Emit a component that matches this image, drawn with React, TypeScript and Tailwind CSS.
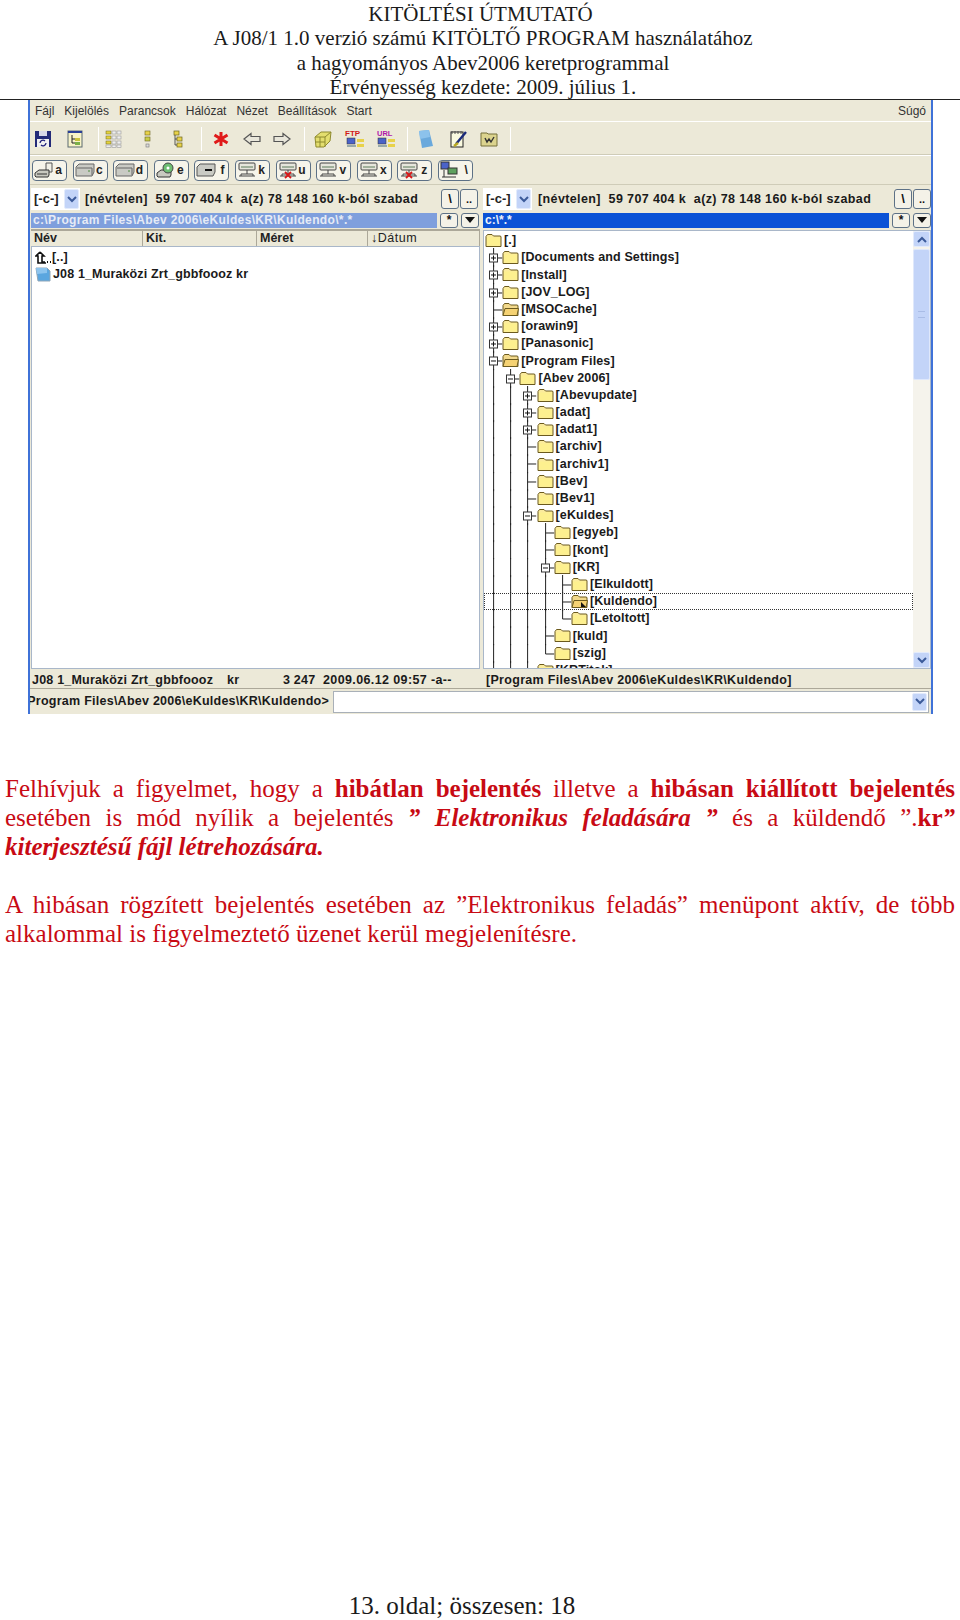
const sans = 'font-["Liberation_Sans",Arial,sans-serif]';

function Folder({ open = false, arrow = false }: { open?: boolean; arrow?: boolean }) {
  return (
    <svg width="17" height="15" viewBox="0 0 17 15" className="shrink-0">
      <path d="M1 13.5V3.5L2.5 1.5H7L8.5 3H15.5L16 4V13.5Z" fill={open ? '#f2d98c' : '#fbeb9c'} stroke="#6b5a1e" strokeWidth="1" />
      {open && <path d="M1 13.5L3 6.5H16.5L15 13.5Z" fill="#f5d273" stroke="#6b5a1e" strokeWidth="1" />}
      {!open && <path d="M2 4.5H15V12.5H2Z" fill="#fdf08f" />}
      {arrow && <path d="M10 8L15 13H10Z" fill="#111" />}
    </svg>
  );
}

type Cell = 'line' | 'tee' | 'elbow' | 'plus' | 'minus' | 'none';

function GuideCell({ kind }: { kind: Cell }) {
  return (
    <svg width="17.2" height="17.2" viewBox="0 0 17.2 17.2" className="shrink-0 overflow-visible">
      {(kind === 'line' || kind === 'tee' || kind === 'plus' || kind === 'minus') && <path d="M8.6 -1V18.2" stroke="#222" strokeWidth="1" />}
      {kind === 'elbow' && <path d="M8.6 -1V9H17.2" stroke="#222" strokeWidth="1" fill="none" />}
      {(kind === 'tee' || kind === 'plus' || kind === 'minus') && <path d="M8.6 9H17.2" stroke="#222" strokeWidth="1" />}
      {(kind === 'plus' || kind === 'minus') && <rect x="4.5" y="5" width="8" height="8" fill="#fff" stroke="#333" />}
      {(kind === 'plus' || kind === 'minus') && <path d="M6 9H11" stroke="#111" strokeWidth="1" />}
      {kind === 'plus' && <path d="M8.5 6.5V11.5" stroke="#111" strokeWidth="1" />}
    </svg>
  );
}

const tree: { cells: Cell[]; label: string; open?: boolean; arrow?: boolean; focus?: boolean }[] = [
  { cells: [], label: '[.]' },
  { cells: ['plus'], label: '[Documents and Settings]' },
  { cells: ['plus'], label: '[Install]' },
  { cells: ['plus'], label: '[JOV_LOG]' },
  { cells: ['tee'], label: '[MSOCache]', open: true },
  { cells: ['plus'], label: '[orawin9]' },
  { cells: ['plus'], label: '[Panasonic]' },
  { cells: ['minus'], label: '[Program Files]', open: true },
  { cells: ['line', 'minus'], label: '[Abev 2006]' },
  { cells: ['line', 'line', 'plus'], label: '[Abevupdate]' },
  { cells: ['line', 'line', 'plus'], label: '[adat]' },
  { cells: ['line', 'line', 'plus'], label: '[adat1]' },
  { cells: ['line', 'line', 'tee'], label: '[archiv]' },
  { cells: ['line', 'line', 'tee'], label: '[archiv1]' },
  { cells: ['line', 'line', 'tee'], label: '[Bev]' },
  { cells: ['line', 'line', 'tee'], label: '[Bev1]' },
  { cells: ['line', 'line', 'minus'], label: '[eKuldes]' },
  { cells: ['line', 'line', 'line', 'tee'], label: '[egyeb]' },
  { cells: ['line', 'line', 'line', 'tee'], label: '[kont]' },
  { cells: ['line', 'line', 'line', 'minus'], label: '[KR]' },
  { cells: ['line', 'line', 'line', 'line', 'tee'], label: '[Elkuldott]' },
  { cells: ['line', 'line', 'line', 'line', 'tee'], label: '[Kuldendo]', open: true, arrow: true, focus: true },
  { cells: ['line', 'line', 'line', 'line', 'elbow'], label: '[Letoltott]' },
  { cells: ['line', 'line', 'line', 'tee'], label: '[kuld]' },
  { cells: ['line', 'line', 'line', 'elbow'], label: '[szig]' },
  { cells: ['line', 'line', 'tee'], label: '[KRTitok]' },
];

function XpArrow({ up = false, className = '' }: { up?: boolean; className?: string }) {
  return (
    <div className={`flex items-center justify-center rounded-[2px] bg-[#c3d4f8] border border-[#e3ebfc] ${className}`}>
      <svg width="10" height="7" viewBox="0 0 10 7">
        <path d={up ? 'M1 6L5 2L9 6' : 'M1 1L5 5L9 1'} fill="none" stroke="#3b5a9a" strokeWidth="2" />
      </svg>
    </div>
  );
}

function SmallButton({ children, className = '' }: { children: React.ReactNode; className?: string }) {
  return (
    <div className={`flex items-center justify-center rounded-[3px] border border-[#5d7186] bg-[#f4f2e8] text-[#111] font-bold ${className}`}>
      {children}
    </div>
  );
}

function DriveBar() {
  return (
    <div className="flex items-center h-[22px]">
      <div className="w-[49px] h-[22px] bg-white flex items-center justify-between pl-[3px] pr-[1px] text-[13px] font-bold text-[#222]">
        <span>[-c-]</span>
        <XpArrow className="w-[15px] h-[20px]" />
      </div>
    </div>
  );
}

function InfoText({ className = '' }: { className?: string }) {
  return (
    <span className={`text-[12.5px] font-bold text-[#1a1a1a] whitespace-pre tracking-[0.38px] ${className}`}>
      [névtelen]  59 707 404 k  a(z) 78 148 160 k-ból szabad
    </span>
  );
}

function Tool({ children, w = 32 }: { children: React.ReactNode; w?: number }) {
  return <div className="flex items-center justify-center shrink-0" style={{ width: w }}>{children}</div>;
}

function Sep() {
  return <div className="w-px h-[24px] bg-[#c3bfa8] border-r border-white shrink-0" />;
}

function Tb({ children }: { children: React.ReactNode }) {
  return <svg width="20" height="20" viewBox="0 0 20 20">{children}</svg>;
}

const yellowTree = (
  <>
    <rect x="7" y="2" width="5" height="4" fill="#e8d24a" stroke="#6b6420" strokeWidth="0.7" />
    <rect x="10" y="8" width="5" height="4" fill="#e8d24a" stroke="#6b6420" strokeWidth="0.7" />
    <rect x="10" y="14" width="5" height="4" fill="#e8d24a" stroke="#6b6420" strokeWidth="0.7" />
    <path d="M8 6V16H10M8 10H10" stroke="#333" fill="none" strokeWidth="0.8" />
  </>
);

function Toolbar() {
  return (
    <div className="flex items-center h-[34px] pt-[1px] pl-[1px] border-t border-white border-b border-b-[#cfccb8] shrink-0">
      <Tool w={24}>
        <Tb>
          <rect x="2" y="2" width="16" height="16" fill="#232a78" />
          <rect x="6" y="2" width="8" height="5" fill="#d8d8e8" />
          <rect x="4" y="10" width="12" height="8" fill="#f0f0f0" />
          <path d="M7 14a3 3 0 0 1 5-2M13 14a3 3 0 0 1-5 2" stroke="#20207a" fill="none" strokeWidth="1.3" />
        </Tb>
      </Tool>
      <Tool w={40}>
        <Tb>
          <rect x="3" y="2" width="14" height="16" fill="#f7f3c8" stroke="#5b6a70" />
          <rect x="3" y="2" width="14" height="2" fill="#2a3f96" />
          <path d="M7 6V14H12M7 10H12" stroke="#222" fill="none" strokeWidth="1" />
          <rect x="10" y="9" width="5" height="3" fill="#c9c23c" />
          <rect x="10" y="13" width="5" height="3" fill="#7ab04a" />
        </Tb>
      </Tool>
      <div className="w-[3px]" />
      <Sep />
      <Tool w={30}>
        <Tb>
          <g fill="#e5d33c" stroke="#6b6420" strokeWidth="0.5">
            <rect x="2" y="2" width="5" height="3" /><rect x="2" y="7" width="5" height="3" /><rect x="2" y="12" width="5" height="3" />
          </g>
          <g fill="#eeeeee" stroke="#9a9a9a" strokeWidth="0.6">
            <rect x="8" y="2" width="4" height="3" /><rect x="13" y="2" width="4" height="3" /><rect x="8" y="7" width="4" height="3" />
            <rect x="13" y="7" width="4" height="3" /><rect x="8" y="12" width="4" height="3" /><rect x="13" y="12" width="4" height="3" />
            <rect x="2" y="16" width="5" height="2.5" /><rect x="8" y="16" width="4" height="2.5" /><rect x="13" y="16" width="4" height="2.5" />
          </g>
        </Tb>
      </Tool>
      <Tool w={36}>
        <Tb>
          <rect x="8" y="2" width="5" height="4" fill="#e8d24a" stroke="#6b6420" strokeWidth="0.6" />
          <rect x="8" y="8" width="5" height="4" fill="#c8cc48" stroke="#6b6420" strokeWidth="0.6" />
          <rect x="9" y="15" width="3" height="3" fill="#ddd" stroke="#777" strokeWidth="0.6" />
        </Tb>
      </Tool>
      <Tool w={24}><Tb>{yellowTree}</Tb></Tool>
      <div className="w-[12px]" />
      <Sep />
      <Tool w={38}>
        <svg width="18" height="18" viewBox="0 0 18 18">
          <path d="M9 2V16M2.5 5L15.5 13M15.5 5L2.5 13" stroke="#e01a1a" strokeWidth="3" />
        </svg>
      </Tool>
      <Tool w={24}>
        <svg width="18" height="14" viewBox="0 0 18 14">
          <path d="M1 7L8 1.5V4.5H17V9.5H8V12.5Z" fill="#e8e6da" stroke="#555" strokeWidth="1.2" />
        </svg>
      </Tool>
      <Tool w={36}>
        <svg width="18" height="14" viewBox="0 0 18 14">
          <path d="M17 7L10 1.5V4.5H1V9.5H10V12.5Z" fill="#e8e6da" stroke="#555" strokeWidth="1.2" />
        </svg>
      </Tool>
      <div className="w-[4px]" />
      <Sep />
      <Tool w={36}>
        <Tb>
          <path d="M2 8L8 3H18L17 12L11 18H3Z" fill="#e3de6e" stroke="#8e8a2e" />
          <path d="M2 8H12V18M12 8L18 3M7 8V18M2 13H12" stroke="#8e8a2e" fill="none" />
        </Tb>
      </Tool>
      <Tool w={28}>
        <svg width="22" height="22" viewBox="0 0 22 22">
          <text x="1" y="8" fontSize="8" fontWeight="700" fill="#d01818" fontFamily="Liberation Sans">FTP</text>
          <rect x="3" y="10" width="8" height="6" fill="#4a62c8" stroke="#333" strokeWidth="0.5" />
          <rect x="3" y="17" width="9" height="2" fill="#9aa" />
          <rect x="13" y="11" width="7" height="3" fill="#e8d24a" />
          <rect x="13" y="16" width="7" height="3" fill="#e8d24a" />
        </svg>
      </Tool>
      <Tool w={34}>
        <svg width="22" height="22" viewBox="0 0 22 22">
          <text x="2" y="8" fontSize="7.5" fontWeight="700" fill="#b015a8" fontFamily="Liberation Sans">URL</text>
          <rect x="3" y="10" width="8" height="6" fill="#4a62c8" stroke="#333" strokeWidth="0.5" />
          <rect x="3" y="17" width="9" height="2" fill="#9aa" />
          <rect x="13" y="11" width="7" height="3" fill="#e8d24a" />
          <rect x="13" y="16" width="7" height="3" fill="#e8d24a" />
        </svg>
      </Tool>
      <div className="w-[4px]" />
      <Sep />
      <Tool w={36}>
        <svg width="18" height="20" viewBox="0 0 18 20">
          <path d="M2 2L12 1L16 17L5 19Z" fill="#6aa9dc" />
          <path d="M2 2L12 1L13 8L3 10Z" fill="#8cc2ec" />
        </svg>
      </Tool>
      <Tool w={28}>
        <Tb>
          <rect x="3" y="3" width="12" height="15" fill="#fafae0" stroke="#222" />
          <path d="M4 2V5M7 2V5M10 2V5M13 2V5" stroke="#555" />
          <path d="M8 15L18 3" stroke="#1b2a7a" strokeWidth="2.4" />
          <path d="M6 17L10 14" stroke="#b8a820" strokeWidth="2.4" />
        </Tb>
      </Tool>
      <Tool w={34}>
        <svg width="18" height="16" viewBox="0 0 18 16">
          <path d="M1 15V2H7L8 3H17V15Z" fill="#dcd48e" stroke="#76703a" />
          <path d="M5 7L7 11L9 8L11 11L14 6" stroke="#333" fill="none" strokeWidth="1.4" />
        </svg>
      </Tool>
      <div className="w-[4px]" />
      <Sep />
    </div>
  );
}

function DriveIcon({ kind }: { kind: string }) {
  if (kind === 'floppy') {
    return (
      <svg width="20" height="17" viewBox="0 0 20 17">
        <path d="M12 1H18V10H12Z" fill="#f0efe6" stroke="#555" />
        <path d="M1 11L5 8H15V13L14 15H2L1 14Z" fill="#c9c9c0" stroke="#333" />
        <path d="M3 12H13" stroke="#333" />
      </svg>
    );
  }
  if (kind === 'hdd') {
    return (
      <svg width="20" height="14" viewBox="0 0 20 14">
        <path d="M1 4L4 1H19V9L17 13H1Z" fill="#c9cac4" stroke="#666" />
        <path d="M2 5H17V12" fill="none" stroke="#666" />
        <path d="M13 8H15" stroke="#4a8a3a" />
      </svg>
    );
  }
  if (kind === 'cd') {
    return (
      <svg width="20" height="17" viewBox="0 0 20 17">
        <path d="M1 11L5 8H15V13L14 15H2L1 14Z" fill="#c9c9c0" stroke="#333" />
        <circle cx="12" cy="6" r="5" fill="#6fbf73" stroke="#444" />
        <circle cx="12" cy="6" r="1.5" fill="#fff" />
      </svg>
    );
  }
  if (kind === 'removable') {
    return (
      <svg width="20" height="14" viewBox="0 0 20 14">
        <path d="M1 4L4 1H19V9L17 13H1Z" fill="#c9cac4" stroke="#555" />
        <path d="M9 7H16" stroke="#111" strokeWidth="2" />
      </svg>
    );
  }
  if (kind === 'net' || kind === 'netx') {
    return (
      <svg width="20" height="17" viewBox="0 0 20 17">
        <rect x="2" y="1" width="16" height="7" rx="1" fill="#e6e6dc" stroke="#444" />
        <path d="M4 5H16" stroke="#5a7a5a" />
        <path d="M10 8V12M2 14H18M10 12H4V14M10 12H16V14" stroke="#444" fill="none" />
        {kind === 'netx' && <path d="M7 10L13 16M13 10L7 16" stroke="#d81818" strokeWidth="1.8" />}
      </svg>
    );
  }
  return (
    <svg width="20" height="18" viewBox="0 0 20 18">
      <rect x="1" y="1" width="8" height="7" fill="#4a62c8" stroke="#333" />
      <rect x="8" y="7" width="9" height="6" fill="#5ea05e" stroke="#333" />
      <path d="M2 16H16M4 9V16" stroke="#333" />
    </svg>
  );
}

const drives = [
  ['a', 'floppy'], ['c', 'hdd'], ['d', 'hdd'], ['e', 'cd'], ['f', 'removable'], ['k', 'net'],
  ['u', 'netx'], ['v', 'net'], ['x', 'net'], ['z', 'netx'], ['\\', 'pc'],
];

function PaneHeaderCell({ children, className = '' }: { children: React.ReactNode; className?: string }) {
  return <div className={`flex items-center h-full pl-[3px] border-r border-[#aca899] text-[12.5px] font-bold text-[#222] ${className}`}>{children}</div>;
}

export default function App() {
  return (
    <div className="w-[960px] h-[1620px] bg-white flex flex-col overflow-hidden font-['Liberation_Serif',serif]">
      <header className="h-[100px] pt-[2px] pl-[6px] border-b border-[#222] text-center text-[21px] leading-[24.4px] text-[#1a1a1a] shrink-0">
        <div className="pr-[5px]">KITÖLTÉSI ÚTMUTATÓ</div>
        <div>A J08/1 1.0 verzió számú KITÖLTŐ PROGRAM használatához</div>
        <div>a hagyományos Abev2006 keretprogrammal</div>
        <div>Érvényesség kezdete: 2009. július 1.</div>
      </header>

      <div className={`ml-[28px] w-[905px] h-[614px] bg-[#ece9d8] border-l-2 border-l-[#3f72d8] border-r-2 border-r-[#3f72d8] flex flex-col overflow-hidden shrink-0 ${sans}`}>
        {/* menu */}
        <div className="h-[21px] flex items-center pl-[5px] pr-[5px] text-[12px] text-[#333] gap-[10px] shrink-0">
          <span>Fájl</span><span>Kijelölés</span><span>Parancsok</span><span>Hálózat</span><span>Nézet</span><span>Beállítások</span><span>Start</span>
          <span className="ml-auto">Súgó</span>
        </div>
        <Toolbar />
        {/* drive buttons */}
        <div className="h-[30px] flex items-center gap-[5.6px] pl-[2px] border-t border-white border-b border-b-[#cfccb8] shrink-0">
          {drives.map(([letter, kind]) => (
            <div key={letter} className="w-[35px] h-[21px] rounded-[4px] border border-[#5d7186] bg-[#f6f4ea] flex items-center justify-between pl-[1px] pr-[4px] text-[12px] font-bold text-[#222]">
              <DriveIcon kind={kind} />
              <span>{letter}</span>
            </div>
          ))}
        </div>

        <div className="flex-1 flex gap-[3px] pl-[1px] pt-[2px] min-h-0">
          {/* left pane */}
          <div className="w-[449px] flex flex-col shrink-0">
            <div className="flex items-center h-[24px] pr-[2px] shrink-0">
              <DriveBar />
              <InfoText className="ml-[5px]" />
              <div className="ml-auto flex gap-[1px]">
                <SmallButton className="w-[18px] h-[20px] text-[13px]">\</SmallButton>
                <SmallButton className="w-[18px] h-[20px] text-[11px]">..</SmallButton>
              </div>
            </div>
            <div className="flex items-center gap-[3px] h-[16px] mt-[1px] shrink-0">
              <div className="w-[406px] h-[15px] bg-[#7f9fdd] text-[#e6ebf6] text-[12px] font-bold leading-[15px] pl-[2px] tracking-[0.35px]">c:\Program Files\Abev 2006\eKuldes\KR\Kuldendo\*.*</div>
              <SmallButton className="w-[18px] h-[15px] text-[12px]">*</SmallButton>
              <SmallButton className="w-[18px] h-[15px]">
                <svg width="10" height="6" viewBox="0 0 10 6"><path d="M0 0H10L5 6Z" fill="#111" /></svg>
              </SmallButton>
            </div>
            <div className="flex h-[17px] mt-[1px] border-t-2 border-[#aca899] shrink-0">
              <PaneHeaderCell className="w-[112px]">Név</PaneHeaderCell>
              <PaneHeaderCell className="w-[114px]">Kit.</PaneHeaderCell>
              <PaneHeaderCell className="w-[111px]">Méret</PaneHeaderCell>
              <PaneHeaderCell className="flex-1 font-normal tracking-[0.5px]">↓Dátum</PaneHeaderCell>
            </div>
            <div className="flex-1 bg-white border border-[#a9b7c9] pt-[2px] text-[12.5px] font-bold text-[#1a1a1a] tracking-[0.14px] min-h-0">
              <div className="h-[17px] flex items-center pl-[3px]">
                <svg width="17" height="13" viewBox="0 0 17 13" className="shrink-0">
                  <path d="M5 1L9 5H7V11H10M5 1L1 5H3V12H11" fill="none" stroke="#111" strokeWidth="1.6" />
                  <path d="M12 11H13M15 11H16" stroke="#111" strokeWidth="2" />
                </svg>
                <span>[..]</span>
              </div>
              <div className="h-[17px] flex items-center pl-[3px]">
                <svg width="16" height="15" viewBox="0 0 16 15" className="shrink-0">
                  <path d="M1 1H12L15 4V14H3Z" fill="#5ba6df" stroke="#8fa6b8" />
                  <path d="M1 1H12L12 6L2 7Z" fill="#8dc4ee" />
                </svg>
                <span className="ml-[2px] w-[198px] whitespace-nowrap">J08 1_Muraközi Zrt_gbbfoooz kr</span>
              </div>
            </div>
          </div>

          {/* right pane */}
          <div className="w-[448px] flex flex-col shrink-0">
            <div className="flex items-center h-[24px] shrink-0">
              <div className="w-[53px]"><DriveBar /></div>
              <InfoText className="ml-[2px]" />
              <div className="ml-auto flex gap-[1px]">
                <SmallButton className="w-[18px] h-[20px] text-[13px]">\</SmallButton>
                <SmallButton className="w-[18px] h-[20px] text-[11px]">..</SmallButton>
              </div>
            </div>
            <div className="flex items-center gap-[3px] h-[16px] mt-[1px] shrink-0">
              <div className="w-[407px] h-[15px] bg-[#0b52d6] text-[#eef2fb] text-[12px] font-bold leading-[15px] pl-[2px]">c:\*.*</div>
              <SmallButton className="w-[18px] h-[15px] text-[12px]">*</SmallButton>
              <SmallButton className="w-[18px] h-[15px]">
                <svg width="10" height="6" viewBox="0 0 10 6"><path d="M0 0H10L5 6Z" fill="#111" /></svg>
              </SmallButton>
            </div>
            <div className="flex-1 mt-[2px] flex bg-white border border-[#a9b7c9] overflow-hidden min-h-0">
              <div className="flex-1 pt-[1px] overflow-hidden">
                {tree.map((row) => (
                  <div key={row.label} className={`h-[17.2px] flex items-center pl-[1px] text-[12.5px] font-bold text-[#1a1a1a] tracking-[0.12px] whitespace-nowrap ${row.focus ? 'outline-1 outline-dotted outline-[#333] -outline-offset-1' : ''}`}>
                    {row.cells.map((cell, i) => <GuideCell key={i} kind={cell} />)}
                    <Folder open={row.open} arrow={row.arrow} />
                    <span className="ml-[2px]">{row.label}</span>
                  </div>
                ))}
              </div>
              <div className="w-[17px] bg-[#f5f3ec] flex flex-col shrink-0">
                <XpArrow up className="h-[16px] shrink-0" />
                <div className="h-[131px] mt-[2px] bg-[#c3d4f8] border border-[#dfe8fb] rounded-[2px] flex items-center justify-center">
                  <div className="w-[7px] h-[7px] border-y border-[#a9bce6] bg-[#c3d4f8]" />
                </div>
                <div className="flex-1" />
                <XpArrow className="h-[16px] shrink-0" />
              </div>
            </div>
          </div>
        </div>

        {/* status row */}
        <div className="h-[20px] pt-[3px] flex items-center text-[12.5px] font-bold text-[#1a1a1a] tracking-[0.2px] whitespace-pre border-b border-[#aca899] shrink-0">
          <span className="ml-[2px] w-[195px] shrink-0">J08 1_Muraközi Zrt_gbbfoooz</span>
          <span className="w-[56px] shrink-0">kr</span>
          <span className="w-[40px] shrink-0">3 247</span>
          <span className="w-[163px] shrink-0 tracking-[0.38px]">2009.06.12 09:57 -a--</span>
          <span className="tracking-[0.31px]">[Program Files\Abev 2006\eKuldes\KR\Kuldendo]</span>
        </div>
        {/* command row */}
        <div className="h-[25px] flex items-center pr-[2px] text-[12.5px] font-bold text-[#1a1a1a] tracking-[0.25px] shrink-0">
          <div className="w-[299px] overflow-hidden whitespace-nowrap flex justify-end shrink-0">
            <span>c:\Program Files\Abev 2006\eKuldes\KR\Kuldendo&gt;</span>
          </div>
          <div className="flex-1 ml-[4px] h-[22px] bg-white border border-[#a9b0b8] flex justify-end items-center pr-[1px]">
            <XpArrow className="w-[15px] h-[18px]" />
          </div>
        </div>
      </div>

      <main className="mt-[60px] px-[5px] text-[25px] leading-[29px] text-[#c80a14] text-justify">
        <p>
          Felhívjuk a figyelmet, hogy a <b>hibátlan bejelentés</b> illetve a <b>hibásan kiállított bejelentés</b> esetében is mód nyílik a bejelentés <b><i>” Elektronikus feladására ”</i></b> és a küldendő ”.<b>kr</b><b><i>”</i></b> <b><i>kiterjesztésű fájl létrehozására.</i></b>
        </p>
        <p className="mt-[29px]">
          A hibásan rögzített bejelentés esetében az ”Elektronikus feladás” menüpont aktív, de több alkalommal is figyelmeztető üzenet kerül megjelenítésre.
        </p>
      </main>

      <footer className="mt-auto h-[28px] pr-[36px] text-center text-[25px] leading-[28px] text-[#1a1a1a]">
        13. oldal; összesen: 18
      </footer>
    </div>
  );
}
